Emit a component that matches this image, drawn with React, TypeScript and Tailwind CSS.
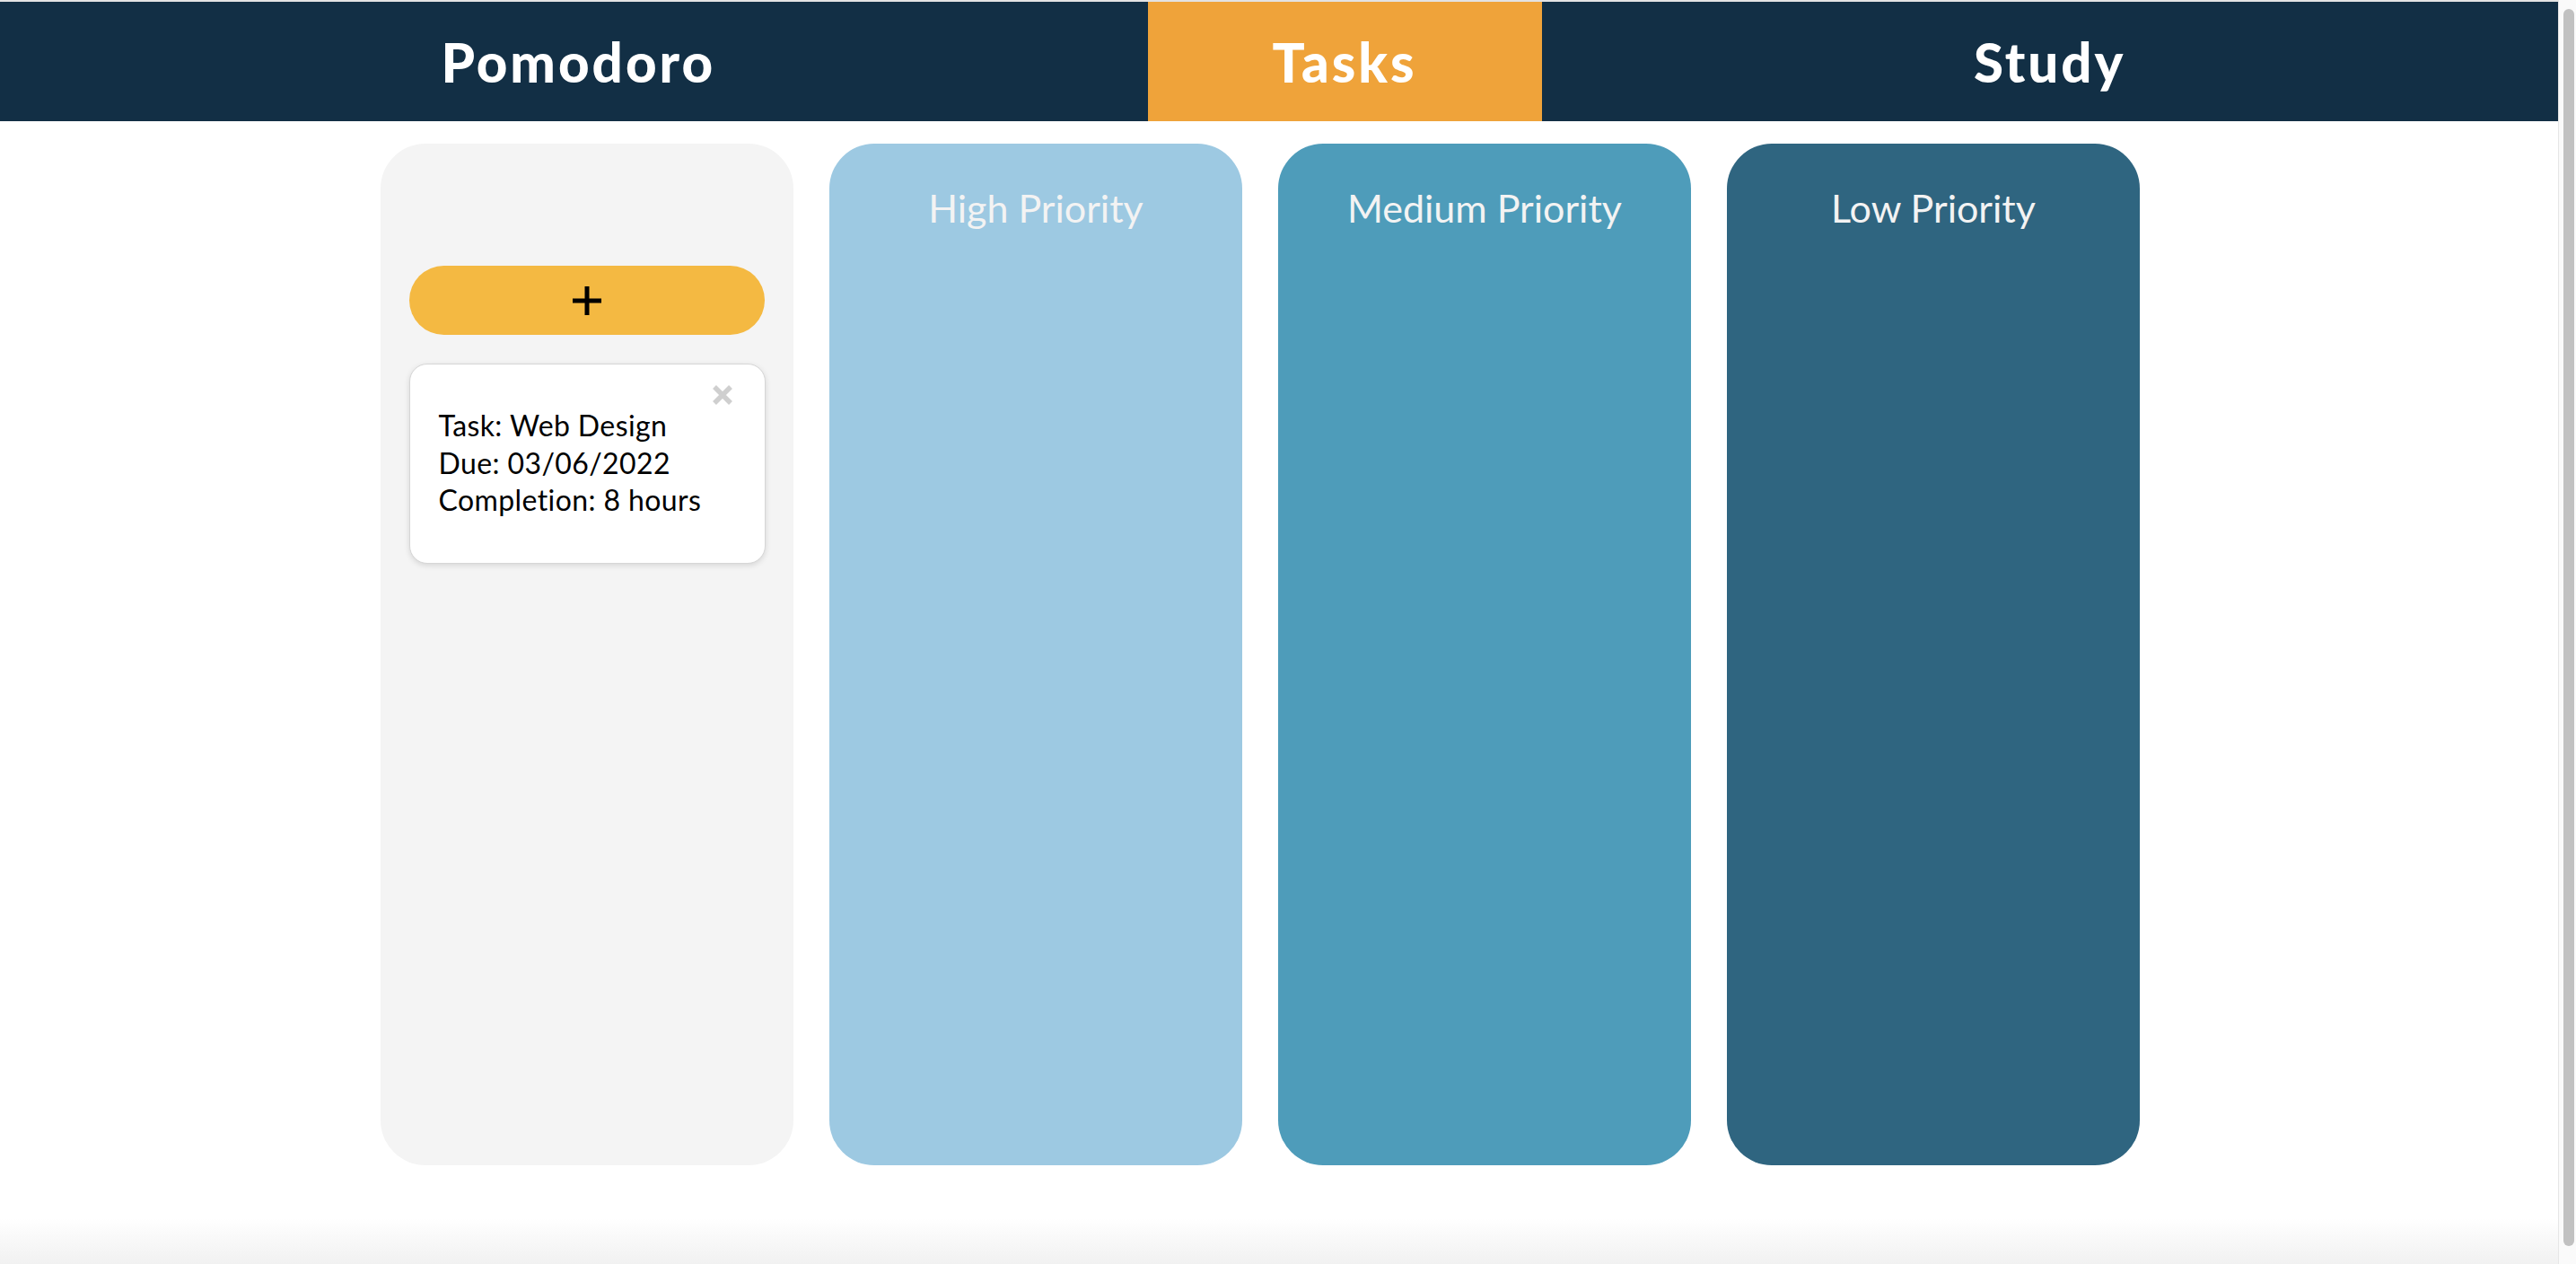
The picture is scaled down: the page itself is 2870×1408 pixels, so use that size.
import React from "react";

const tabs = [
  { label: "Pomodoro", width: "w-[583px]", active: false },
  { label: "Tasks", width: "w-[439px]", active: true },
  { label: "Study", width: "w-[447px]", active: false },
];

const columns = [
  { title: "High Priority", bg: "bg-[#9dc9e2]" },
  { title: "Medium Priority", bg: "bg-[#4e9cba]" },
  { title: "Low Priority", bg: "bg-[#2f6580]" },
];

const TaskCard: React.FC = () => (
  <div className="relative h-[223px] w-[397px] rounded-[20px] border border-[#d6d6d6] bg-white pl-[32px] pt-[47px] text-[32px] leading-[41.5px] tracking-[0.4px] text-black shadow-[0_2px_6px_rgba(0,0,0,0.12)]">
    <button className="absolute right-[35px] top-[22px] h-[24px] w-[24px]" aria-label="Delete task">
      <svg viewBox="0 0 24 24" className="h-full w-full" fill="none" stroke="#cfcfcf" strokeWidth="5.5" strokeLinecap="butt">
        <path d="M3 3 L21 21 M21 3 L3 21" />
      </svg>
    </button>
    <div>Task: Web Design</div>
    <div>Due: 03/06/2022</div>
    <div>Completion: 8 hours</div>
  </div>
);

export default function App() {
  return (
    <div className="flex h-[1408px] w-full overflow-hidden bg-white font-['Lato','Liberation_Sans',sans-serif]">
      <div className="flex min-w-0 flex-1 flex-col">
        <div className="h-[2px] bg-[#e3e3e3]" />
        <nav className="flex h-[133px] items-stretch justify-evenly bg-[#122f45] pl-[10px]">
          {tabs.map((t) => (
            <div
              key={t.label}
              className={`flex ${t.width} items-center justify-center text-[60px] font-black tracking-[3px] text-white ${t.active ? "bg-[#efa33a]" : ""}`}
            >
              {t.label}
            </div>
          ))}
        </nav>

        <main className="flex gap-[40px] pl-[424px] pt-[25px]">
          <section className="flex h-[1138px] w-[460px] flex-col items-center rounded-[50px] bg-[#f4f4f4] pt-[136px]">
            <button className="flex h-[77px] w-[396px] items-center justify-center rounded-full bg-[#f4b942]" aria-label="Add task">
              <svg viewBox="0 0 32 32" className="h-[32px] w-[32px]" fill="none" stroke="#000" strokeWidth="5">
                <path d="M16 0 V32 M0 16 H32" />
              </svg>
            </button>
            <div className="mt-[32px]">
              <TaskCard />
            </div>
          </section>
          {columns.map((c) => (
            <section
              key={c.title}
              className={`h-[1138px] w-[460px] rounded-[50px] ${c.bg} pt-[46px] text-center text-[43px] leading-[52px] text-[#f3f3f3]`}
            >
              {c.title}
            </section>
          ))}
        </main>

        <div className="flex-1" />
        <div className="h-[51px] bg-gradient-to-b from-white to-[#f1f1f1]" />
      </div>

      <div className="flex w-[20px] flex-col border-l border-[#e6e6e6] bg-[#fafafa] pb-[20px] pl-[5px] pr-[2px] pt-[10px]">
        <div className="flex-1 rounded-full bg-[#c1c1c1]" />
      </div>
    </div>
  );
}
